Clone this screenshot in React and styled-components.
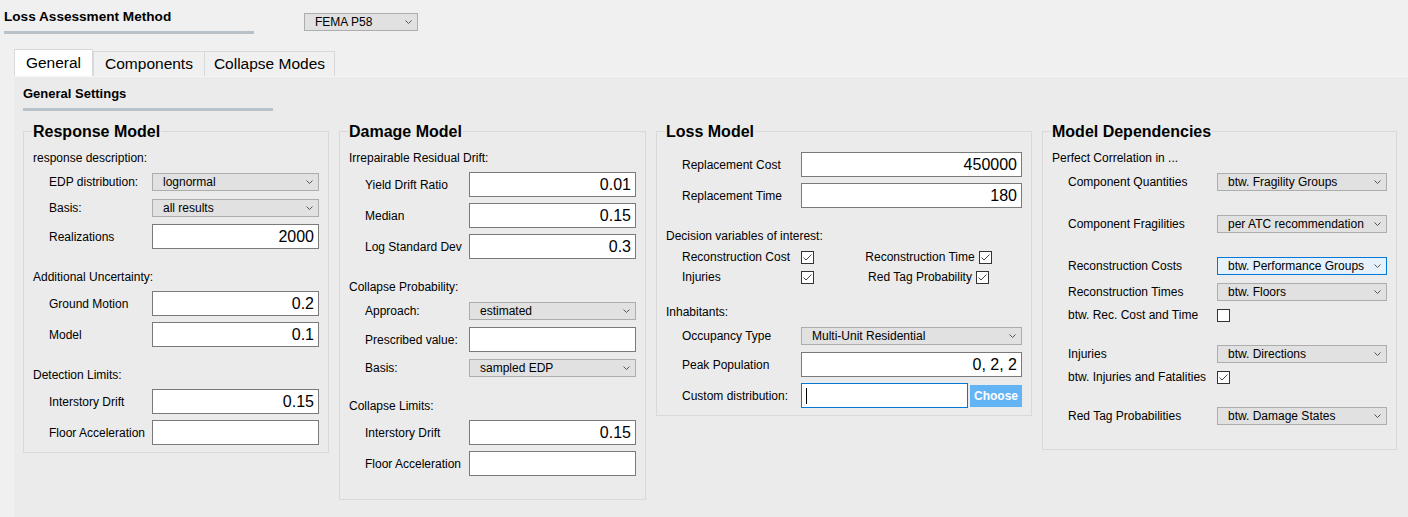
import React from 'react';
import styled, { createGlobalStyle } from 'styled-components';

const Global = createGlobalStyle`
  html, body { margin: 0; padding: 0; background: #f0f0f0; }
  body { font-family: "Liberation Sans", Arial, sans-serif; color: #000; }
  #root { min-height: 100vh; display: flex; flex-direction: column; }
`;

const Page = styled.div`
  flex: 1;
  display: flex;
  flex-direction: column;
  background: #f0f0f0;
`;

const TopBar = styled.div`
  display: flex;
  align-items: flex-start;
  padding: 9px 0 0 4px;
`;

const TitleBlock = styled.div`
  display: flex;
  flex-direction: column;
  width: 250px;
`;

const TopTitle = styled.div`
  font-size: 13.6px;
  font-weight: 700;
  line-height: 16px;
  white-space: nowrap;
`;

const Rule = styled.div`
  height: 3px;
  width: ${p => p.$w}px;
  background: #b8c0c8;
  margin-top: ${p => p.$mt}px;
`;

const ComboBox = styled.div`
  box-sizing: border-box;
  height: 18px;
  ${p => (p.$w ? `width: ${p.$w}px; flex: none;` : 'flex: 1; min-width: 0;')}
  margin-left: ${p => p.$ml || 0}px;
  margin-top: ${p => p.$mt || 0}px;
  display: flex;
  align-items: center;
  justify-content: space-between;
  padding: 0 5px 0 10px;
  border: 1px solid ${p => (p.$focus ? '#0078d7' : '#adadad')};
  background: ${p => (p.$focus ? '#e5f1fb' : '#e1e1e1')};
  font-size: 12px;
  line-height: 14px;
  white-space: nowrap;
  overflow: hidden;
`;

const Arrow = styled.svg`
  flex: none;
  width: 7px;
  height: 4px;
  margin-left: 4px;
`;

const Tabs = styled.div`
  display: flex;
  align-items: flex-end;
  height: 27px;
  margin-top: 15px;
  padding-left: 14px;
`;

const Tab = styled.div`
  box-sizing: border-box;
  width: ${p => p.$w}px;
  height: ${p => (p.$active ? 27 : 25)}px;
  display: flex;
  align-items: center;
  justify-content: center;
  font-size: 15.5px;
  border: 1px solid #d9d9d9;
  border-bottom: none;
  margin-right: ${p => (p.$active ? 0 : -1)}px;
  background: ${p => (p.$active ? '#ffffff' : '#f0f0f0')};
  white-space: nowrap;
`;

const Pane = styled.div`
  flex: 1;
  margin-left: 14px;
  background: #ebebeb;
  border-top: 1px solid #f6f6f6;
  padding: 0 0 18px 9px;
  display: flex;
  flex-direction: column;
`;

const SettingsTitle = styled.div`
  margin-top: 9px;
  font-size: 13px;
  font-weight: 700;
  line-height: 16px;
`;

const Groups = styled.div`
  display: flex;
  align-items: flex-start;
  gap: 10px;
  margin-top: 20px;
`;

const Group = styled.div`
  box-sizing: border-box;
  width: ${p => p.$w}px;
  flex: none;
  border: 1px solid #d9d9d9;
  padding: 0 9px ${p => p.$pb}px;
  display: flex;
  flex-direction: column;
`;

const GroupTitle = styled.div`
  align-self: flex-start;
  margin: -9px 0 0 -1px;
  padding: 0 1px;
  background: #ebebeb;
  font-size: 16px;
  font-weight: 700;
  line-height: 18px;
  white-space: nowrap;
`;

const Body = styled.div`
  display: flex;
  flex-direction: column;
  gap: 6px;
  margin-top: 9px;
`;

const SectionLabel = styled.div`
  font-size: 12px;
  line-height: 16px;
  margin-top: ${p => p.$mt || 0}px;
  white-space: nowrap;
`;

const Row = styled.div`
  display: flex;
  align-items: center;
  height: ${p => p.$h}px;
  padding-left: 16px;
  margin-top: ${p => p.$mt || 0}px;
`;

const RowLabel = styled.div`
  flex: none;
  width: ${p => p.$w}px;
  font-size: 12px;
  line-height: 16px;
  white-space: nowrap;
`;

const Field = styled.div`
  box-sizing: border-box;
  flex: 1;
  min-width: 0;
  height: 25px;
  display: flex;
  align-items: center;
  justify-content: ${p => (p.$focus ? 'flex-start' : 'flex-end')};
  padding: 0 4px;
  background: #ffffff;
  border: 1px solid ${p => (p.$focus ? '#0078d7' : '#7a7a7a')};
  font-size: 16px;
  line-height: 18px;
  white-space: nowrap;
`;

const Caret = styled.span`
  display: block;
  width: 1px;
  height: 16px;
  background: #000;
`;

const ChooseButton = styled.div`
  flex: none;
  box-sizing: border-box;
  width: 52px;
  height: 22px;
  margin-left: 2px;
  display: flex;
  align-items: center;
  justify-content: center;
  background: #63b4f5;
  color: #ffffff;
  font-size: 12px;
  font-weight: 700;
`;

const Box = styled.div`
  flex: none;
  box-sizing: border-box;
  width: 13px;
  height: 13px;
  border: 1px solid #333333;
  background: #ffffff;
  display: flex;
  align-items: center;
  justify-content: center;
`;

const RightCell = styled.div`
  flex: 1;
  margin-left: 21px;
  display: flex;
  align-items: center;
  justify-content: center;
  gap: 4px;
  font-size: 12px;
  line-height: 16px;
  white-space: nowrap;
`;

const Check = ({ on }) => (
  <Box>
    {on && (
      <svg width="11" height="11" viewBox="0 0 11 11">
        <polyline points="1.5,5.5 4,8 9.5,2.5" fill="none" stroke="#444" strokeWidth="1" />
      </svg>
    )}
  </Box>
);

const Combo = ({ children, ...rest }) => (
  <ComboBox {...rest}>
    <span>{children}</span>
    <Arrow viewBox="0 0 7 4">
      <polyline points="0.5,0.5 3.5,3.5 6.5,0.5" fill="none" stroke="#555" strokeWidth="1" />
    </Arrow>
  </ComboBox>
);

const InputRow = ({ label, lw, value, mt }) => (
  <Row $h={25} $mt={mt}>
    <RowLabel $w={lw}>{label}</RowLabel>
    <Field>{value}</Field>
  </Row>
);

const ComboRow = ({ label, lw, value, mt, focus }) => (
  <Row $h={20} $mt={mt}>
    <RowLabel $w={lw}>{label}</RowLabel>
    <Combo $focus={focus}>{value}</Combo>
  </Row>
);

const CheckRow = ({ label, lw, on, mt }) => (
  <Row $h={14} $mt={mt}>
    <RowLabel $w={lw}>{label}</RowLabel>
    <Check on={on} />
  </Row>
);

const DualCheckRow = ({ label, on, right, rightOn }) => (
  <Row $h={14}>
    <RowLabel $w={119}>{label}</RowLabel>
    <Check on={on} />
    <RightCell>
      <span>{right}</span>
      <Check on={rightOn} />
    </RightCell>
  </Row>
);

export default function App() {
  return (
    <>
      <Global />
      <Page>
        <TopBar>
          <TitleBlock>
            <TopTitle>Loss Assessment Method</TopTitle>
            <Rule $w={250} $mt={6} />
          </TitleBlock>
          <Combo $w={114} $ml={50} $mt={4}>FEMA P58</Combo>
        </TopBar>

        <Tabs>
          <Tab $active $w={79}>General</Tab>
          <Tab $w={112}>Components</Tab>
          <Tab $w={131}>Collapse Modes</Tab>
        </Tabs>

        <Pane>
          <SettingsTitle>General Settings</SettingsTitle>
          <Rule $w={250} $mt={6} />

          <Groups>
            <Group $w={306} $pb={7}>
              <GroupTitle>Response Model</GroupTitle>
              <Body>
                <SectionLabel>response description:</SectionLabel>
                <ComboRow lw={103} label="EDP distribution:" value="lognormal" />
                <ComboRow lw={103} label="Basis:" value="all results" />
                <InputRow lw={103} label="Realizations" value="2000" />
                <SectionLabel $mt={14}>Additional Uncertainty:</SectionLabel>
                <InputRow lw={103} label="Ground Motion" value="0.2" />
                <InputRow lw={103} label="Model" value="0.1" />
                <SectionLabel $mt={14}>Detection Limits:</SectionLabel>
                <InputRow lw={103} label="Interstory Drift" value="0.15" />
                <InputRow lw={103} label="Floor Acceleration" value="" />
              </Body>
            </Group>

            <Group $w={307} $pb={23}>
              <GroupTitle>Damage Model</GroupTitle>
              <Body>
                <SectionLabel>Irrepairable Residual Drift:</SectionLabel>
                <InputRow lw={104} label="Yield Drift Ratio" value="0.01" />
                <InputRow lw={104} label="Median" value="0.15" />
                <InputRow lw={104} label="Log Standard Dev" value="0.3" />
                <SectionLabel $mt={14}>Collapse Probability:</SectionLabel>
                <ComboRow lw={104} label="Approach:" value="estimated" />
                <InputRow lw={104} label="Prescribed value:" value="" />
                <ComboRow lw={104} label="Basis:" value="sampled EDP" />
                <SectionLabel $mt={14}>Collapse Limits:</SectionLabel>
                <InputRow lw={104} label="Interstory Drift" value="0.15" />
                <InputRow lw={104} label="Floor Acceleration" value="" />
              </Body>
            </Group>

            <Group $w={376} $pb={7}>
              <GroupTitle>Loss Model</GroupTitle>
              <Body>
                <InputRow lw={119} mt={2} label="Replacement Cost" value="450000" />
                <InputRow lw={119} label="Replacement Time" value="180" />
                <SectionLabel $mt={14}>Decision variables of interest:</SectionLabel>
                <DualCheckRow label="Reconstruction Cost" on right="Reconstruction Time" rightOn />
                <DualCheckRow label="Injuries" on right="Red Tag Probability" rightOn />
                <SectionLabel $mt={14}>Inhabitants:</SectionLabel>
                <ComboRow lw={119} label="Occupancy Type" value="Multi-Unit Residential" />
                <InputRow lw={119} label="Peak Population" value="0, 2, 2" />
                <Row $h={25}>
                  <RowLabel $w={119}>Custom distribution:</RowLabel>
                  <Field $focus>
                    <Caret />
                  </Field>
                  <ChooseButton>Choose</ChooseButton>
                </Row>
              </Body>
            </Group>

            <Group $w={355} $pb={23}>
              <GroupTitle>Model Dependencies</GroupTitle>
              <Body>
                <SectionLabel>Perfect Correlation in ...</SectionLabel>
                <ComboRow lw={149} label="Component Quantities" value="btw. Fragility Groups" />
                <ComboRow lw={149} mt={16} label="Component Fragilities" value="per ATC recommendation" />
                <ComboRow lw={149} mt={16} focus label="Reconstruction Costs" value="btw. Performance Groups" />
                <ComboRow lw={149} label="Reconstruction Times" value="btw. Floors" />
                <CheckRow lw={149} label="btw. Rec. Cost and Time" />
                <ComboRow lw={149} mt={16} label="Injuries" value="btw. Directions" />
                <CheckRow lw={149} on label="btw. Injuries and Fatalities" />
                <ComboRow lw={149} mt={16} label="Red Tag Probabilities" value="btw. Damage States" />
              </Body>
            </Group>
          </Groups>
        </Pane>
      </Page>
    </>
  );
}
